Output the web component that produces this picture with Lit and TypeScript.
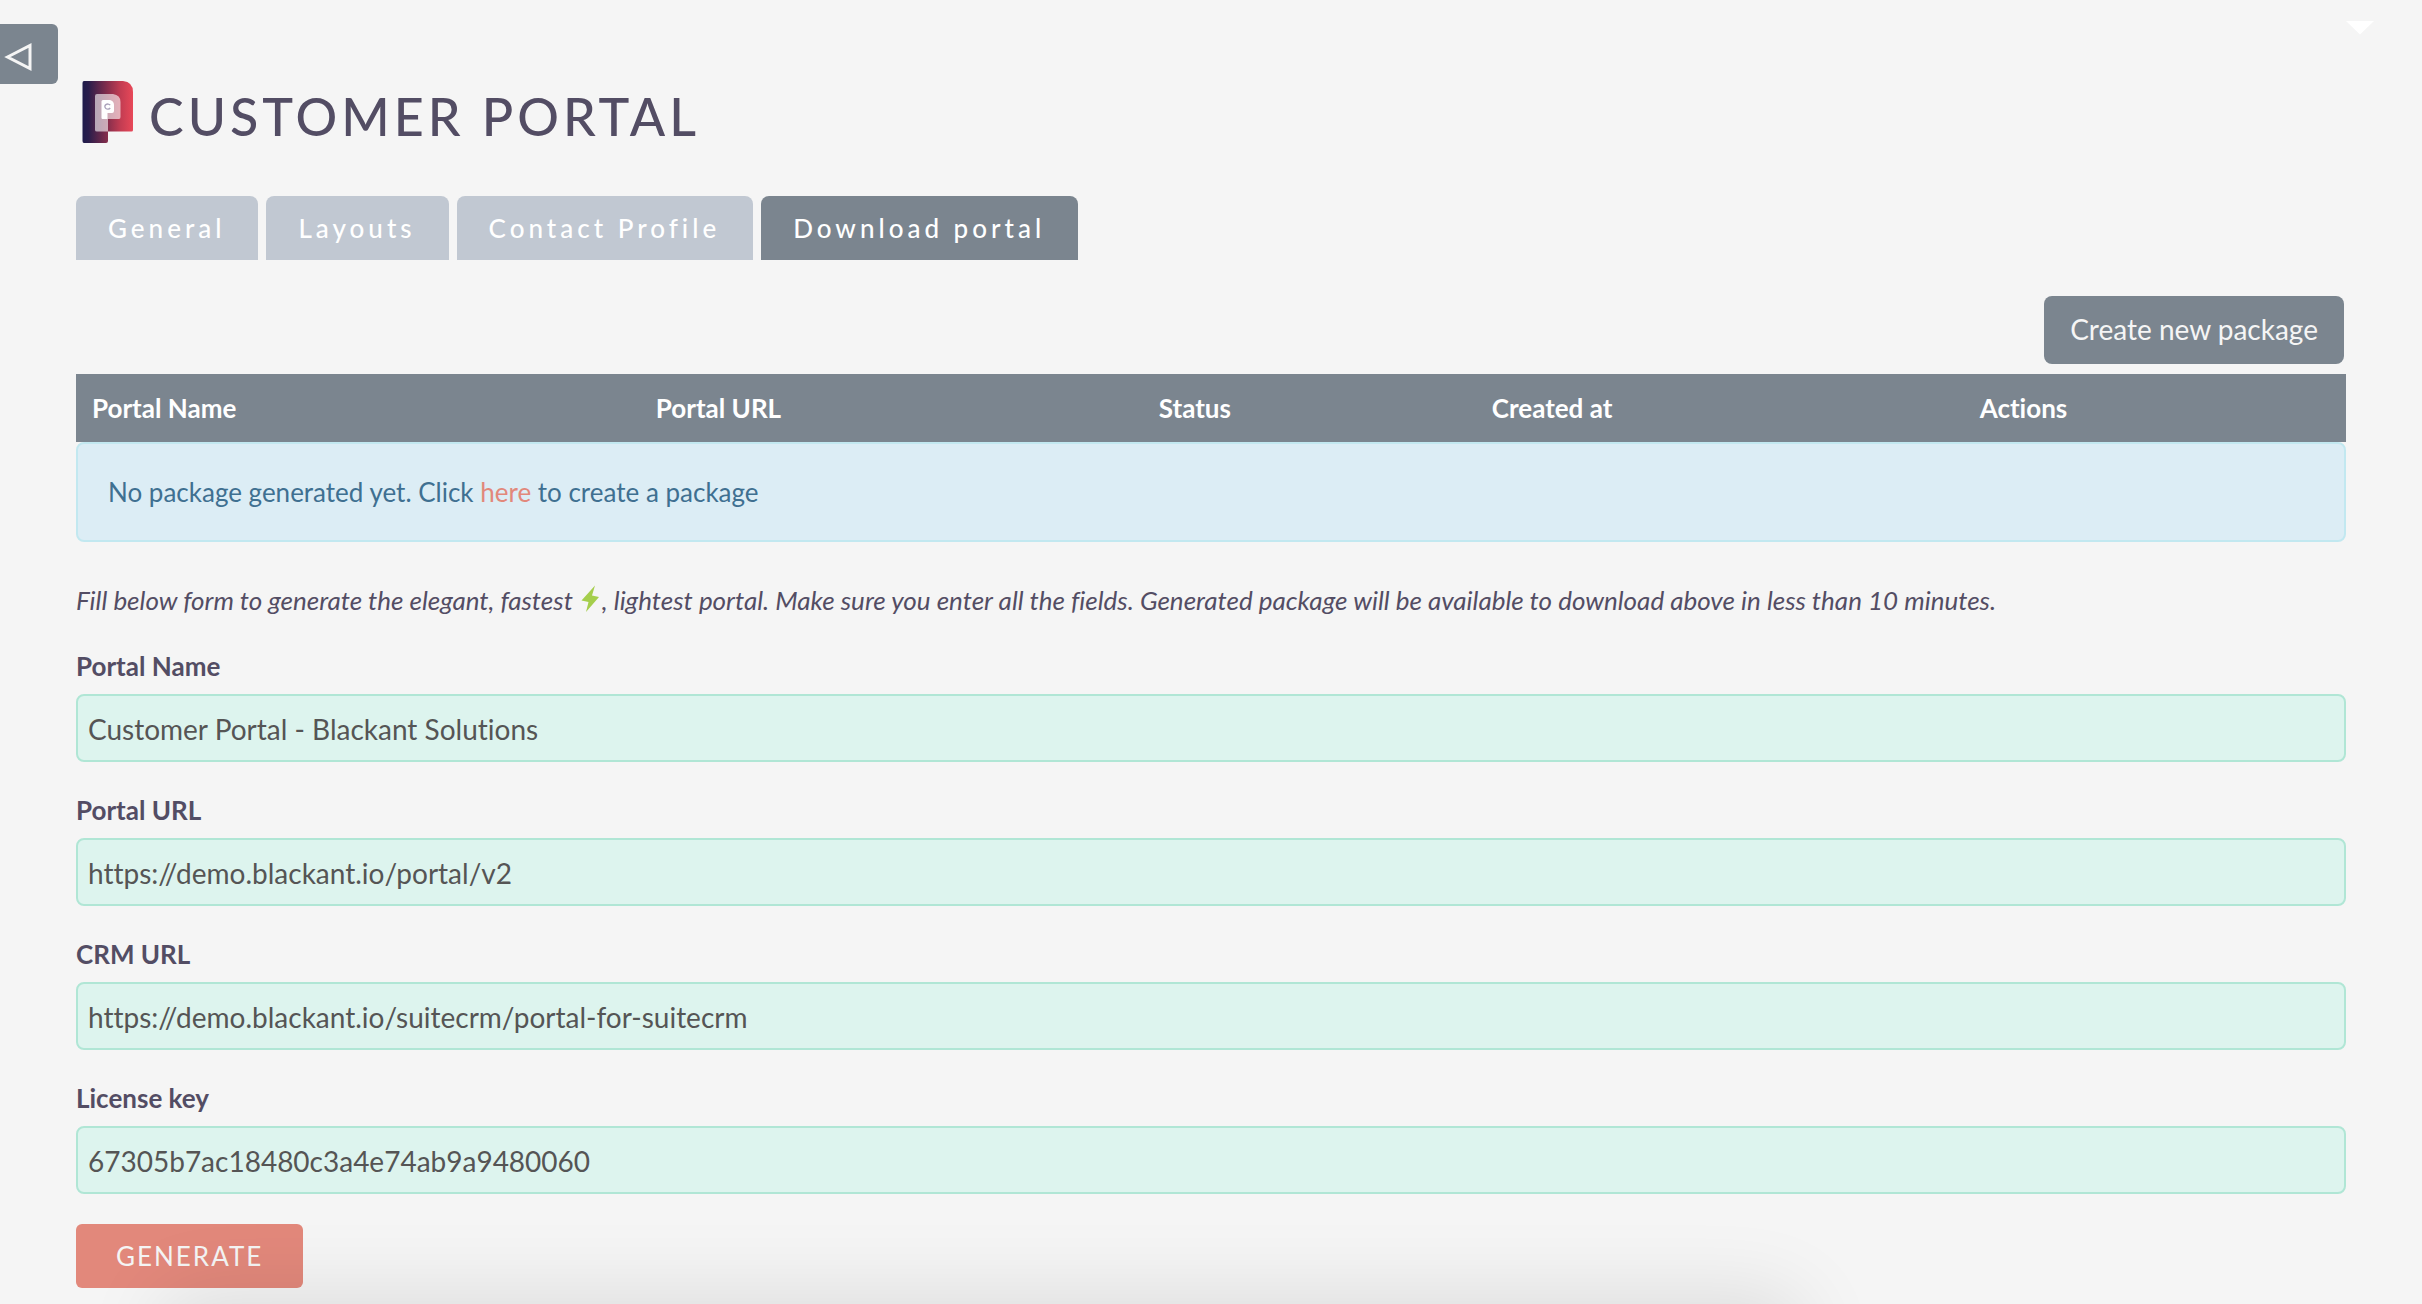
import { LitElement, html, css, svg } from "lit";
import { customElement, property, state } from "lit/decorators.js";
import { classMap } from "lit/directives/class-map.js";

interface Field {
  id: string;
  label: string;
  value: string;
}

const TABS = ["General", "Layouts", "Contact Profile", "Download portal"];
const COLUMNS = ["Portal Name", "Portal URL", "Status", "Created at", "Actions"];
const FIELDS: Field[] = [
  { id: "portal-name", label: "Portal Name", value: "Customer Portal - Blackant Solutions" },
  { id: "portal-url", label: "Portal URL", value: "https://demo.blackant.io/portal/v2" },
  { id: "crm-url", label: "CRM URL", value: "https://demo.blackant.io/suitecrm/portal-for-suitecrm" },
  { id: "license-key", label: "License key", value: "67305b7ac18480c3a4e74ab9a9480060" },
];

@customElement("portal-logo")
export class PortalLogo extends LitElement {
  static styles = css`
    :host {
      display: block;
      flex: none;
    }
    .mark {
      display: block;
      width: 52px;
      height: 62px;
    }
  `;

  render() {
    return html`<svg class="mark" viewBox="0 0 52 62" aria-hidden="true">
      ${svg`
        <defs>
          <linearGradient id="fill" x1="0" x2="1" y1="0" y2="0">
            <stop offset="0" stop-color="#1e1b4b" />
            <stop offset="0.12" stop-color="#2a1d4b" />
            <stop offset="0.48" stop-color="#822d4c" />
            <stop offset="0.75" stop-color="#c23c52" />
            <stop offset="1" stop-color="#e84858" />
          </linearGradient>
        </defs>
        <path fill="url(#fill)" d="M2 0H41Q51 1 51 11V49Q51 50.500 49.500 50.500H26V60Q26 62 24 62H2Q0.500 62 0.500 60V2Q0.500 0 2 0Z" />
        <path fill="#ffffff" fill-opacity="0.6" d="M15 13H31Q38.500 14 38.500 21V36Q38.500 38 37 38H26V50.500H15Q13 50.500 13 49V15Q13 13 15 13Z" />
        <path fill="#ffffff" d="M21 19H28Q32 20 32 24V30Q32 32 30 32H25.500V38H20.500Q19.500 38 19.500 37V20.500Q19.500 19 21 19Z" />
        <path fill="none" stroke="#aaa2ba" stroke-width="1.300" d="M28.200 24.200A2.900 2.600 0 1 0 28.200 27" />
      `}
    </svg>`;
  }
}

@customElement("app-root")
export class AppRoot extends LitElement {
  @property({ type: String }) heading = "Customer Portal";
  @state() private activeTab = "Download portal";

  static styles = css`
    :host {
      --slate: #7b858f;
      --ink: #534d64;
      --coral: #e2887b;
      display: block;
      position: relative;
      box-sizing: border-box;
      min-height: 100vh;
      padding: 24px 76px 14px;
      overflow: hidden;
      background: #f5f5f5;
      color: var(--ink);
      font-family: Lato, "Liberation Sans", sans-serif;
      font-size: 26px;
      font-variant-ligatures: none;
      line-height: 36px;
    }
    *,
    *::before {
      box-sizing: border-box;
    }
    button,
    input {
      margin: 0;
      border: 0;
      font: inherit;
      font-variant-ligatures: none;
    }
    button {
      cursor: pointer;
    }
    .sidebar-toggle {
      position: absolute;
      top: 24px;
      left: 0;
      width: 58px;
      height: 60px;
      padding: 0;
      border-radius: 0 6px 6px 0;
      background: var(--slate);
    }
    .toggle-icon {
      display: block;
      width: 58px;
      height: 60px;
    }
    .menu-caret {
      position: absolute;
      top: 20px;
      right: 48px;
      width: 28px;
      height: 15px;
      padding: 0;
      background: none;
    }
    .caret-icon {
      display: block;
      width: 28px;
      height: 15px;
    }
    .header {
      display: flex;
      align-items: flex-start;
      gap: 15px;
      padding: 57px 6px 46px;
    }
    .title {
      margin: 0;
      padding-top: 1px;
      font-size: 52px;
      font-weight: 500;
      line-height: 68px;
      letter-spacing: 4px;
      text-transform: uppercase;
    }
    .tabs {
      display: flex;
      gap: 8px;
    }
    .tab {
      height: 64px;
      padding: 0 33px 0 32px;
      border-radius: 8px 8px 0 0;
      background: #c1c8d2;
      color: #ffffff;
      font-weight: 500;
      letter-spacing: 4px;
    }
    .tab.active {
      background: var(--slate);
    }
    .toolbar {
      display: flex;
      justify-content: flex-end;
      padding: 36px 2px 10px;
    }
    .create {
      height: 68px;
      padding: 0 26px 2px;
      border-radius: 8px;
      background: var(--slate);
      color: #f5f5f5;
      font-size: 28px;
    }
    .packages {
      width: 100%;
      border-collapse: collapse;
      background: var(--slate);
      color: #ffffff;
    }
    .column {
      padding: 16px;
      font-weight: 700;
      text-align: left;
    }
    .notice {
      padding: 30px;
      border: 2px solid #c2e8f0;
      border-radius: 8px;
      background: #dcedf5;
      color: #3f7091;
    }
    .link {
      color: var(--coral);
      text-decoration: none;
    }
    .intro {
      margin: 0;
      padding: 40px 0 30px;
      font-style: italic;
    }
    .bolt {
      width: 19px;
      height: 28px;
      margin: 0 2px 0 8px;
      vertical-align: -3px;
    }
    .form {
      display: flex;
      flex-direction: column;
      align-items: stretch;
      gap: 30px;
    }
    .field {
      display: flex;
      flex-direction: column;
      gap: 10px;
    }
    .label {
      font-weight: 700;
    }
    .input {
      width: 100%;
      height: 68px;
      padding: 2px 10px 0;
      border: 2px solid #b0e6d5;
      border-radius: 8px;
      background: #ddf4ee;
      color: #555555;
      font-size: 28px;
    }
    .generate {
      align-self: flex-start;
      height: 64px;
      padding: 0 40px;
      border-radius: 6px;
      background: var(--coral);
      color: #f5f5f5;
      letter-spacing: 2px;
      text-transform: uppercase;
    }
    .dock-shadow {
      position: absolute;
      right: 26%;
      bottom: -100px;
      left: 7%;
      height: 100px;
      border-radius: 20px;
      box-shadow: 0 0 80px 10px rgba(0, 0, 0, 0.1);
      pointer-events: none;
    }
  `;

  render() {
    return html`
      <button class="sidebar-toggle" type="button" aria-label="Collapse sidebar">
        <svg class="toggle-icon" viewBox="0 0 58 60" aria-hidden="true">
          <path d="M7.500 33L30 21.500V44.500Z" fill="none" stroke="#f5f5f5" stroke-width="3" />
        </svg>
      </button>
      <button class="menu-caret" type="button" aria-label="Open menu">
        <svg class="caret-icon" viewBox="0 0 28 15" aria-hidden="true">
          <path d="M0 1H28L14 14.500Z" fill="#ffffff" />
        </svg>
      </button>

      <header class="header">
        <portal-logo></portal-logo>
        <h1 class="title">${this.heading}</h1>
      </header>

      <nav class="tabs" role="tablist">
        ${TABS.map(
          (tab) => html`<button
            type="button"
            role="tab"
            aria-selected=${tab === this.activeTab ? "true" : "false"}
            class=${classMap({ tab: true, active: tab === this.activeTab })}
            @click=${() => (this.activeTab = tab)}
          >${tab}</button>`
        )}
      </nav>

      <div class="toolbar">
        <button class="create" type="button">Create new package</button>
      </div>

      <table class="packages">
        <thead>
          <tr>
            ${COLUMNS.map((column) => html`<th class="column" scope="col">${column}</th>`)}
          </tr>
        </thead>
      </table>
      <div class="notice" role="status">
        No package generated yet. Click <a class="link" href="#portal-name">here</a> to create a package
      </div>

      <p class="intro">Fill below form to generate the elegant, fastest<svg class="bolt" viewBox="0 0 19 28" aria-hidden="true">
          <path d="M14 0.500L0.500 15.500L7.500 17L5 27L18 12L11 10.500Z" fill="#a5ce4c" />
        </svg>, lightest portal. Make sure you enter all the fields. Generated package will be available to download above in less than 10 minutes.</p>

      <form class="form" @submit=${(event: Event) => event.preventDefault()}>
        ${FIELDS.map(
          (field) => html`<div class="field">
            <label class="label" for=${field.id}>${field.label}</label>
            <input class="input" id=${field.id} type="text" .value=${field.value} />
          </div>`
        )}
        <button class="generate" type="submit">Generate</button>
      </form>
      <div class="dock-shadow"></div>
    `;
  }
}
